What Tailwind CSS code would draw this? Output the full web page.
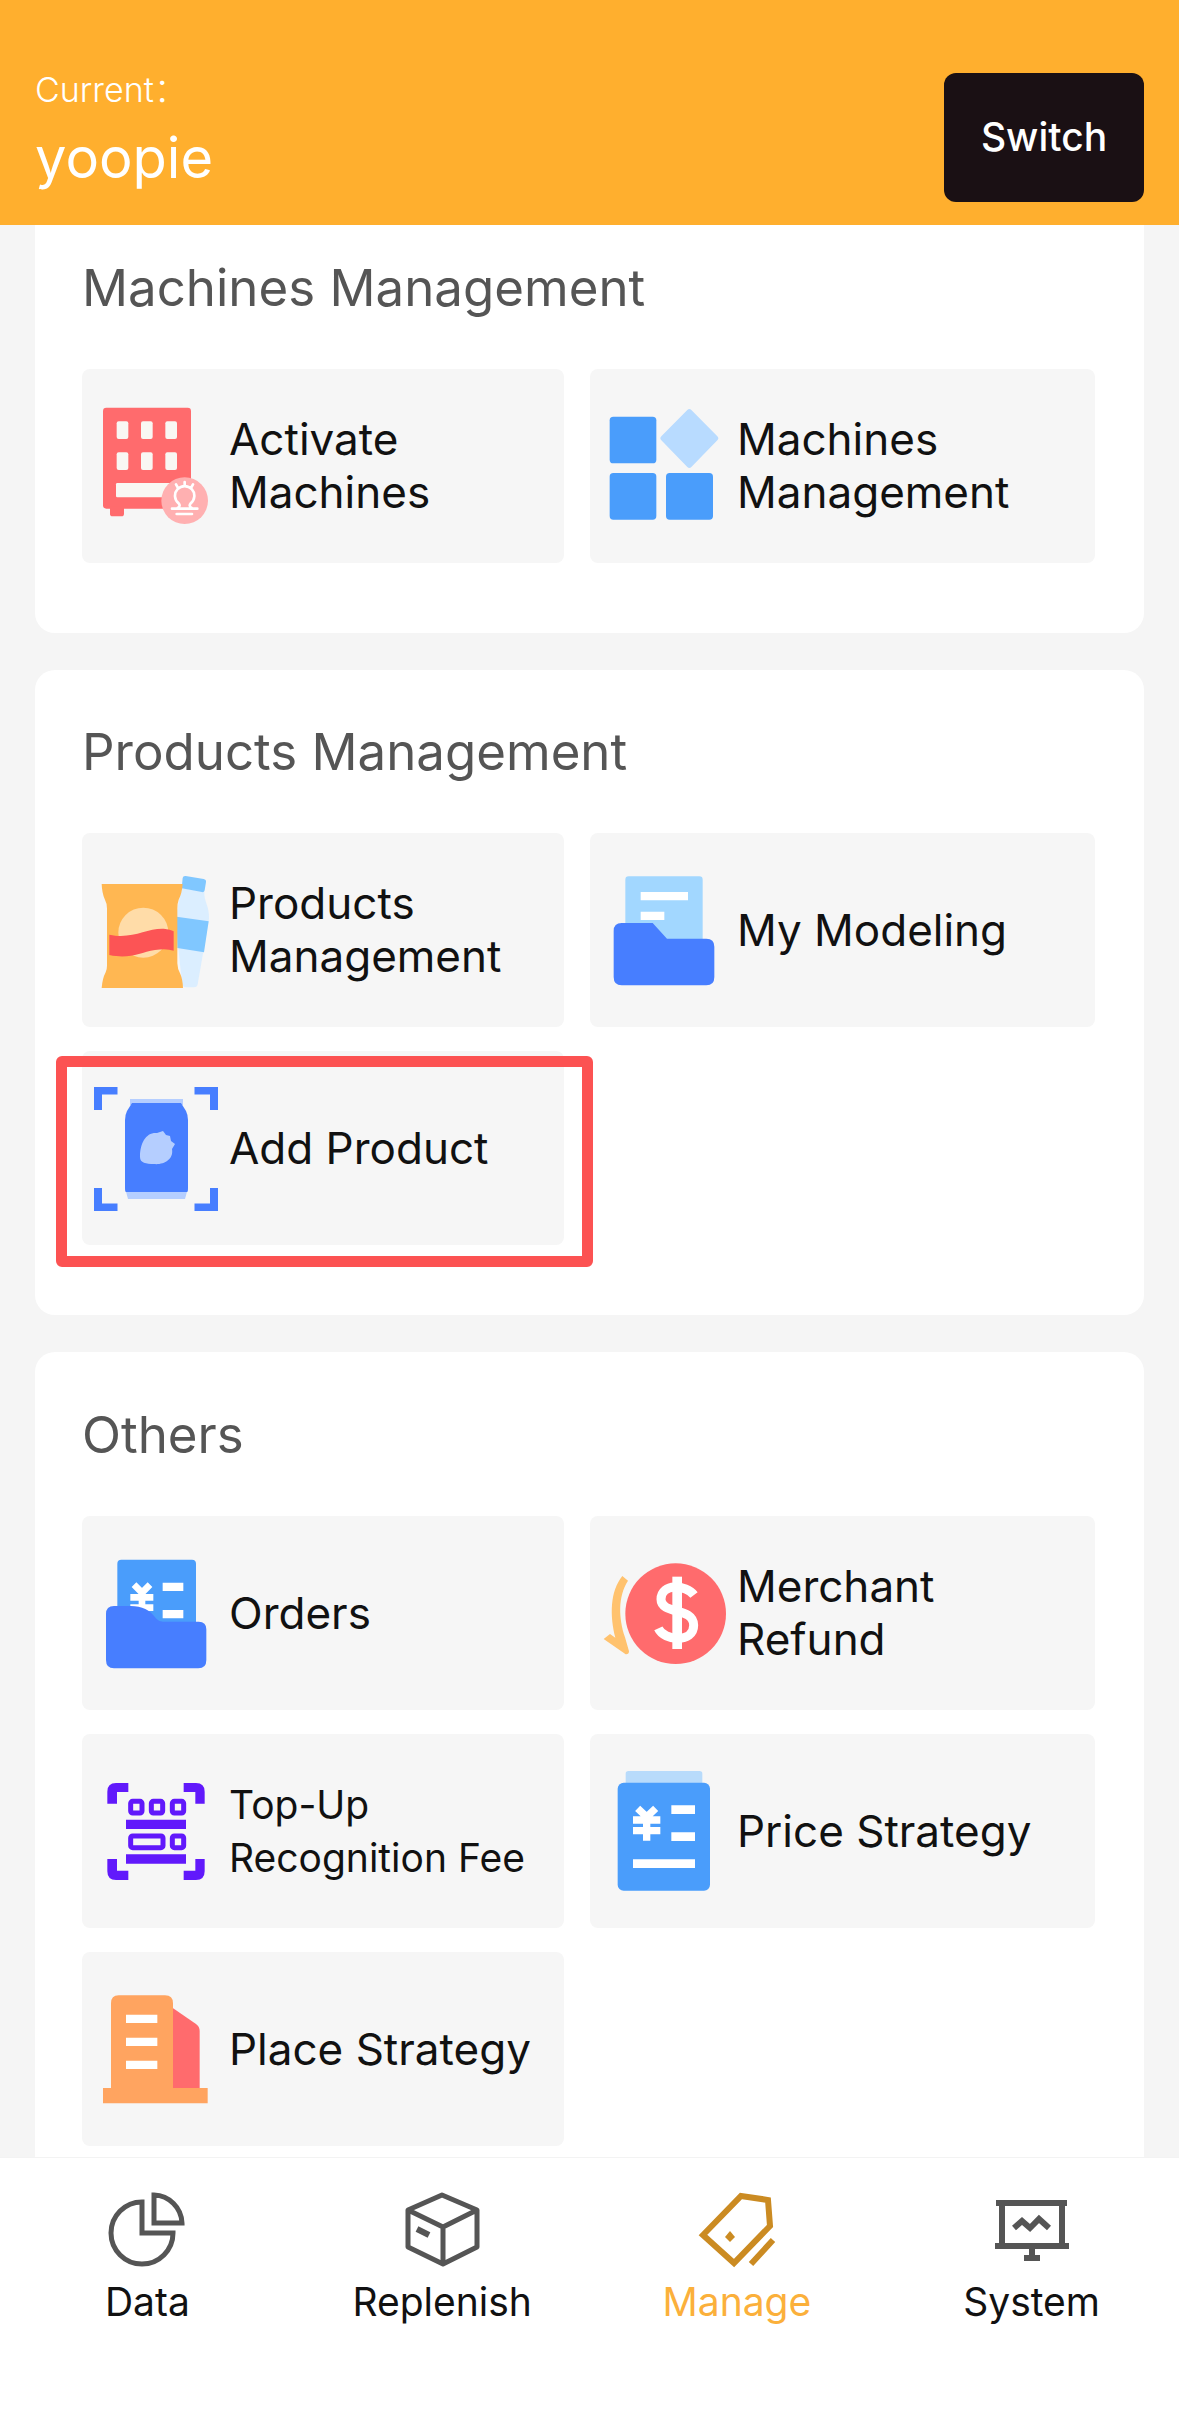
<!DOCTYPE html>
<html lang="en">
<head>
<meta charset="utf-8">
<meta name="viewport" content="width=device-width, initial-scale=1">
<title>Manage</title>
<script src="https://cdn.jsdelivr.net/npm/@tailwindcss/browser@4"></script>
</head>
<body class="min-h-screen flex flex-col bg-[#f5f5f5] font-['Inter','Noto_Sans_CJK_SC',sans-serif] text-[#111111]">

<header class="relative z-10 flex items-start justify-between bg-[#ffaf2e] px-[35px] pt-[68px] pb-[23px] text-white">
  <div>
    <p class="text-[34px] leading-[44px] font-light">Current：</p>
    <p class="mt-[14px] text-[56px] leading-[64px]">yoopie</p>
  </div>
  <button type="button" class="mt-[5px] h-[129px] w-[200px] rounded-xl bg-[#1a1014] text-[39px] font-medium">Switch</button>
</header>

<main class="-mt-[19px] flex flex-col gap-[37px] px-[35px]">

  <section class="rounded-[20px] bg-white pt-[50px] pr-[49px] pb-[70px] pl-[47px]">
    <h2 class="mb-[49px] text-[51px] leading-[64px] text-[#555555]">Machines Management</h2>
    <div class="grid grid-cols-[482fr_505fr] gap-x-[26px] gap-y-6">
      <a href="#" class="flex h-[194px] items-center gap-[14px] rounded-lg bg-[#f6f6f6] pl-[13px] text-[44px] leading-[53px]">
        <svg class="size-[120px] shrink-0 overflow-visible" viewBox="45 78 360 360" aria-hidden="true">
          <rect x="69" y="83" width="264" height="303" rx="10" fill="#ff6b6d"/>
          <path d="M90 380h42v21q0 8-8 8H98q-8 0-8-8z" fill="#ff6b6d"/>
          <g fill="#f9f7f3"><rect x="110" y="124" width="35" height="53" rx="6"/><rect x="183" y="124" width="35" height="53" rx="6"/><rect x="256" y="124" width="35" height="53" rx="6"/><rect x="110" y="217" width="35" height="53" rx="6"/><rect x="183" y="217" width="35" height="53" rx="6"/><rect x="256" y="217" width="35" height="53" rx="6"/><rect x="108" y="309" width="170" height="43" rx="4"/></g>
          <circle cx="314" cy="362" r="70" fill="#ffb0b1"/>
          <g fill="none" stroke="#fff" stroke-width="8" stroke-linecap="round"><path d="M276 386h76M293 384q10-6 3-14a29 29 0 1 1 36 0q-7 8 3 14M290 402h46M314 306v10M288 313l5 9M339 313l-5 9"/></g>
        </svg>
        <span>Activate<br>Machines</span>
      </a>
      <a href="#" class="flex h-[194px] items-center gap-[14px] rounded-lg bg-[#f6f6f6] pl-[13px] text-[44px] leading-[53px]">
        <svg class="size-[120px] shrink-0 overflow-visible" viewBox="36 48 360 360" aria-hidden="true">
          <g fill="#4a9dfb"><rect x="56" y="80" width="140" height="140" rx="11"/><rect x="56" y="249" width="140" height="140" rx="11"/><rect x="225" y="249" width="141" height="140" rx="11"/></g>
          <path d="M289 60q6-6 12 0l78 79q6 6 0 12l-78 80q-6 6-12 0l-78-80q-6-6 0-12z" fill="#b8dbff"/>
        </svg>
        <span>Machines<br>Management</span>
      </a>
    </div>
  </section>

  <section class="rounded-[20px] bg-white pt-[50px] pr-[49px] pb-[70px] pl-[47px]">
    <h2 class="mb-[49px] text-[51px] leading-[64px] text-[#555555]">Products Management</h2>
    <div class="grid grid-cols-[482fr_505fr] gap-x-[26px] gap-y-6">
      <a href="#" class="flex h-[194px] items-center gap-[14px] rounded-lg bg-[#f6f6f6] pl-[13px] text-[44px] leading-[53px]">
        <svg class="size-[120px] shrink-0 overflow-visible" viewBox="45 30 360 360" aria-hidden="true">
          <path d="M304 84l69 11c-2 28 16 44 14 82l-34 196q-2 9-10 9h-23q-14 0-14-12l-20-190z" fill="#dbeeff"/>
          <path d="M290 170l96 14-14 93-80-13zM308 54q1-7 9-6l54 9q8 2 7 9l-4 25q-1 7-8 5l-61-11z" fill="#80c7ff"/>
          <path d="M65 72h243q-2 28-12 47-4 10-4 28v163q0 16 9 32 7 16 8 42H65q2-28 12-47 4-8 4-20V146q0-16-7-29-8-18-9-45z" fill="#ffb752"/>
          <circle cx="190" cy="218" r="75" fill="#ffdca8"/>
          <path d="M88 224c70 16 116-22 168-17q14 1 25 7v58q-22-8-56-2c-46 8-76 28-137 15z" fill="#fc5455"/>
        </svg>
        <span>Products<br>Management</span>
      </a>
      <a href="#" class="flex h-[194px] items-center gap-[14px] rounded-lg bg-[#f6f6f6] pl-[13px] text-[44px] leading-[53px]">
        <svg class="size-[120px] shrink-0 overflow-visible" viewBox="36 30 360 360" aria-hidden="true">
          <rect x="103" y="49" width="232" height="220" rx="10" fill="#a2d7ff"/>
          <path d="M149 96h142v25H149zM149 155h71v25h-71z" fill="#fff"/>
          <path d="M92 189h93l43 47h118q24 0 24 24v91q0 25-24 25H92q-24 0-24-25V213q0-24 24-24z" fill="#477eff"/>
        </svg>
        <span>My Modeling</span>
      </a>
      <a href="#" class="relative flex h-[194px] items-center gap-[14px] rounded-lg bg-[#f6f6f6] pl-[13px] text-[44px] leading-[53px]">
        <svg class="size-[120px] shrink-0 overflow-visible" viewBox="95 1088 120 120" aria-hidden="true">
          <path d="M94 1087h23.500v7.500h-15.500v15.500h-8zM218 1087h-23.500v7.500h15.500v15.500h8zM94 1211h23.500v-7.500h-15.500v-15.500h-8zM218 1211h-23.500v-7.500h15.500v-15.500h8z" fill="#477eff"/>
          <path d="M130 1099h53v6h-53zM125 1188h63l-3 11h-57z" fill="#b5ceff"/>
          <path d="M132 1103h49l5 8q2 4 2 9v68q0 4-1 4h-61q-1 0-1-4v-68q0-5 2-9z" fill="#477eff"/>
          <path d="M140 1157c0-14 6-25 17-24l6-2 3 4 4 1 1 5 4 3-3 5c2 11-9 16-18 15-8 0-14-1-14-7z" fill="#b5ceff"/>
        </svg>
        <span>Add Product</span>
        <span class="pointer-events-none absolute -left-[26px] top-[5px] -right-[29px] -bottom-[22px] rounded-md border-[11px] border-[#fc5252]" aria-hidden="true"></span>
      </a>
    </div>
  </section>

  <section class="rounded-t-[20px] bg-white pt-[51px] pr-[49px] pb-[11px] pl-[47px]">
    <h2 class="mb-[49px] text-[51px] leading-[64px] text-[#555555]">Others</h2>
    <div class="grid grid-cols-[482fr_505fr] gap-x-[26px] gap-y-6">
      <a href="#" class="flex h-[194px] items-center gap-[14px] rounded-lg bg-[#f6f6f6] pl-[13px] text-[44px] leading-[53px]">
        <svg class="size-[120px] shrink-0 overflow-visible" viewBox="45 39 360 360" aria-hidden="true">
          <rect x="112" y="59" width="236" height="220" rx="12" fill="#4a9dfb"/>
          <path d="M248 128h62v25h-62zM248 210h62v25h-62z" fill="#fff"/>
          <path d="M162 134l24 24 24-24M186 156v60M151 172h69M151 203h69" fill="none" stroke="#fff" stroke-width="20"/>
          <path d="M102 198h50c34 0 58 12 77 38q8 9 20 9h107q23 0 23 23v92q0 25-24 25H102q-24 0-24-25V222q0-24 24-24z" fill="#477eff"/>
        </svg>
        <span>Orders</span>
      </a>
      <a href="#" class="flex h-[194px] items-center gap-[14px] rounded-lg bg-[#f6f6f6] pl-[13px] text-[44px] leading-[53px]">
        <svg class="size-[120px] shrink-0 overflow-visible" viewBox="36 39 360 360" aria-hidden="true">
          <circle cx="254" cy="221" r="151" fill="#ff6b6d"/>
          <path d="M309 165C286 134 210 128 210 178C210 225 308 200 308 256C308 310 220 304 202 265" fill="none" stroke="#fff" stroke-width="27"/>
          <path d="M244 110h29v217h-29z" fill="#fff"/>
          <path d="M94 108l17 14C80 170 83 235 102 292L114 334q0 10-10 9L38 297l19-15 16 11C56 226 57 154 94 108z" fill="#ffc26e"/>
        </svg>
        <span>Merchant<br>Refund</span>
      </a>
      <a href="#" class="flex h-[194px] items-center gap-[14px] rounded-lg bg-[#f6f6f6] pl-[13px] text-[39px] leading-[53px]">
        <svg class="size-[120px] shrink-0 overflow-visible" viewBox="45 48 360 360" aria-hidden="true">
          <g fill="#6119fb"><path d="M82 146v-36q0-26 26-26h37v27h-34v35zM374 146v-36q0-26-26-26h-37v27h35v35zM82 312v37q0 26 26 26h37v-28h-34v-35zM374 312v37q0 26-26 26h-37v-28h35v-35zM138 194h180v28H138zM138 298h180v28H138z"/></g>
          <g fill="none" stroke="#6119fb" stroke-width="15"><rect x="152" y="139" width="34" height="35" rx="6"/><rect x="214" y="139" width="34" height="35" rx="6"/><rect x="277" y="139" width="34" height="35" rx="6"/><rect x="152" y="243" width="97" height="35" rx="6"/><rect x="277" y="243" width="34" height="35" rx="6"/></g>
        </svg>
        <span>Top-Up<br>Recognition Fee</span>
      </a>
      <a href="#" class="flex h-[194px] items-center gap-[14px] rounded-lg bg-[#f6f6f6] pl-[13px] text-[44px] leading-[53px]">
        <svg class="size-[120px] shrink-0 overflow-visible" viewBox="36 48 360 360" aria-hidden="true">
          <rect x="104" y="48" width="230" height="60" rx="8" fill="#b8dbfb"/>
          <rect x="80" y="83" width="277" height="324" rx="18" fill="#4a9dfb"/>
          <path d="M241 151h71v26h-71zM241 232h71v26h-71zM126 313h186v26H126z" fill="#fff"/>
          <path d="M140 160l27 26 27-26M167 184v73M126 195h82M126 227h82" fill="none" stroke="#fff" stroke-width="22"/>
        </svg>
        <span>Price Strategy</span>
      </a>
      <a href="#" class="flex h-[194px] items-center gap-[14px] rounded-lg bg-[#f6f6f6] pl-[13px] text-[44px] leading-[53px]">
        <svg class="size-[120px] shrink-0 overflow-visible" viewBox="45 57 360 360" aria-hidden="true">
          <path d="M275 112l73 50q11 8 11 21v175h-84z" fill="#ff6b6d"/>
          <path d="M116 76h139q24 0 24 24v254h104v46H69v-46h24V100q0-24 23-24z" fill="#ffa460"/>
          <path d="M138 134h94v25h-94zM138 203h94v25h-94zM138 272h94v25h-94z" fill="#fff"/>
        </svg>
        <span class="whitespace-nowrap">Place Strategy</span>
      </a>
    </div>
  </section>
</main>

<nav class="grid flex-1 grid-cols-4 content-start border-t border-[#f3f3f3] bg-white pt-8 pb-24 text-[39px] leading-[48px]">
  <a href="#" class="flex flex-col items-center gap-2">
    <svg class="size-20" viewBox="0 0 80 80" fill="none" stroke="#555" stroke-width="5" aria-hidden="true"><path d="M35 12V43H66A31 31 0 1 1 35 12zM47 5V33H75A29 29 0 0 0 47 5z"/></svg>
    Data
  </a>
  <a href="#" class="flex flex-col items-center gap-2">
    <svg class="size-20" viewBox="0 0 80 80" fill="none" stroke="#555" stroke-width="5" stroke-linejoin="round" aria-hidden="true"><path d="M40 5L75 20V57L41 74L6 57V20zM6 20L41 37L75 20M41 37V74"/><path d="M15 39L27 45" stroke-width="6"/></svg>
    Replenish
  </a>
  <a href="#" class="flex flex-col items-center gap-2 text-[#fbb03b]" aria-current="page">
    <svg class="size-20" viewBox="0 0 80 80" fill="none" stroke="#cb8b22" stroke-width="6" aria-hidden="true"><path d="M44 6L71 10L73 36L37 73L6 45zM76 50L54 74"/><path d="M33 41l5 6-5 5-5-5z" fill="#cb8b22" stroke="none"/></svg>
    Manage
  </a>
  <a href="#" class="flex flex-col items-center gap-2">
    <svg class="size-20" viewBox="0 0 80 80" fill="none" stroke="#555" stroke-width="6" aria-hidden="true"><path d="M4 13H75M3 56H77M10 13V56M70 13V56M40 56V68M32 68H48M22 38L30 31L38 38L47 29L57 38"/></svg>
    System
  </a>
</nav>
</body>
</html>
